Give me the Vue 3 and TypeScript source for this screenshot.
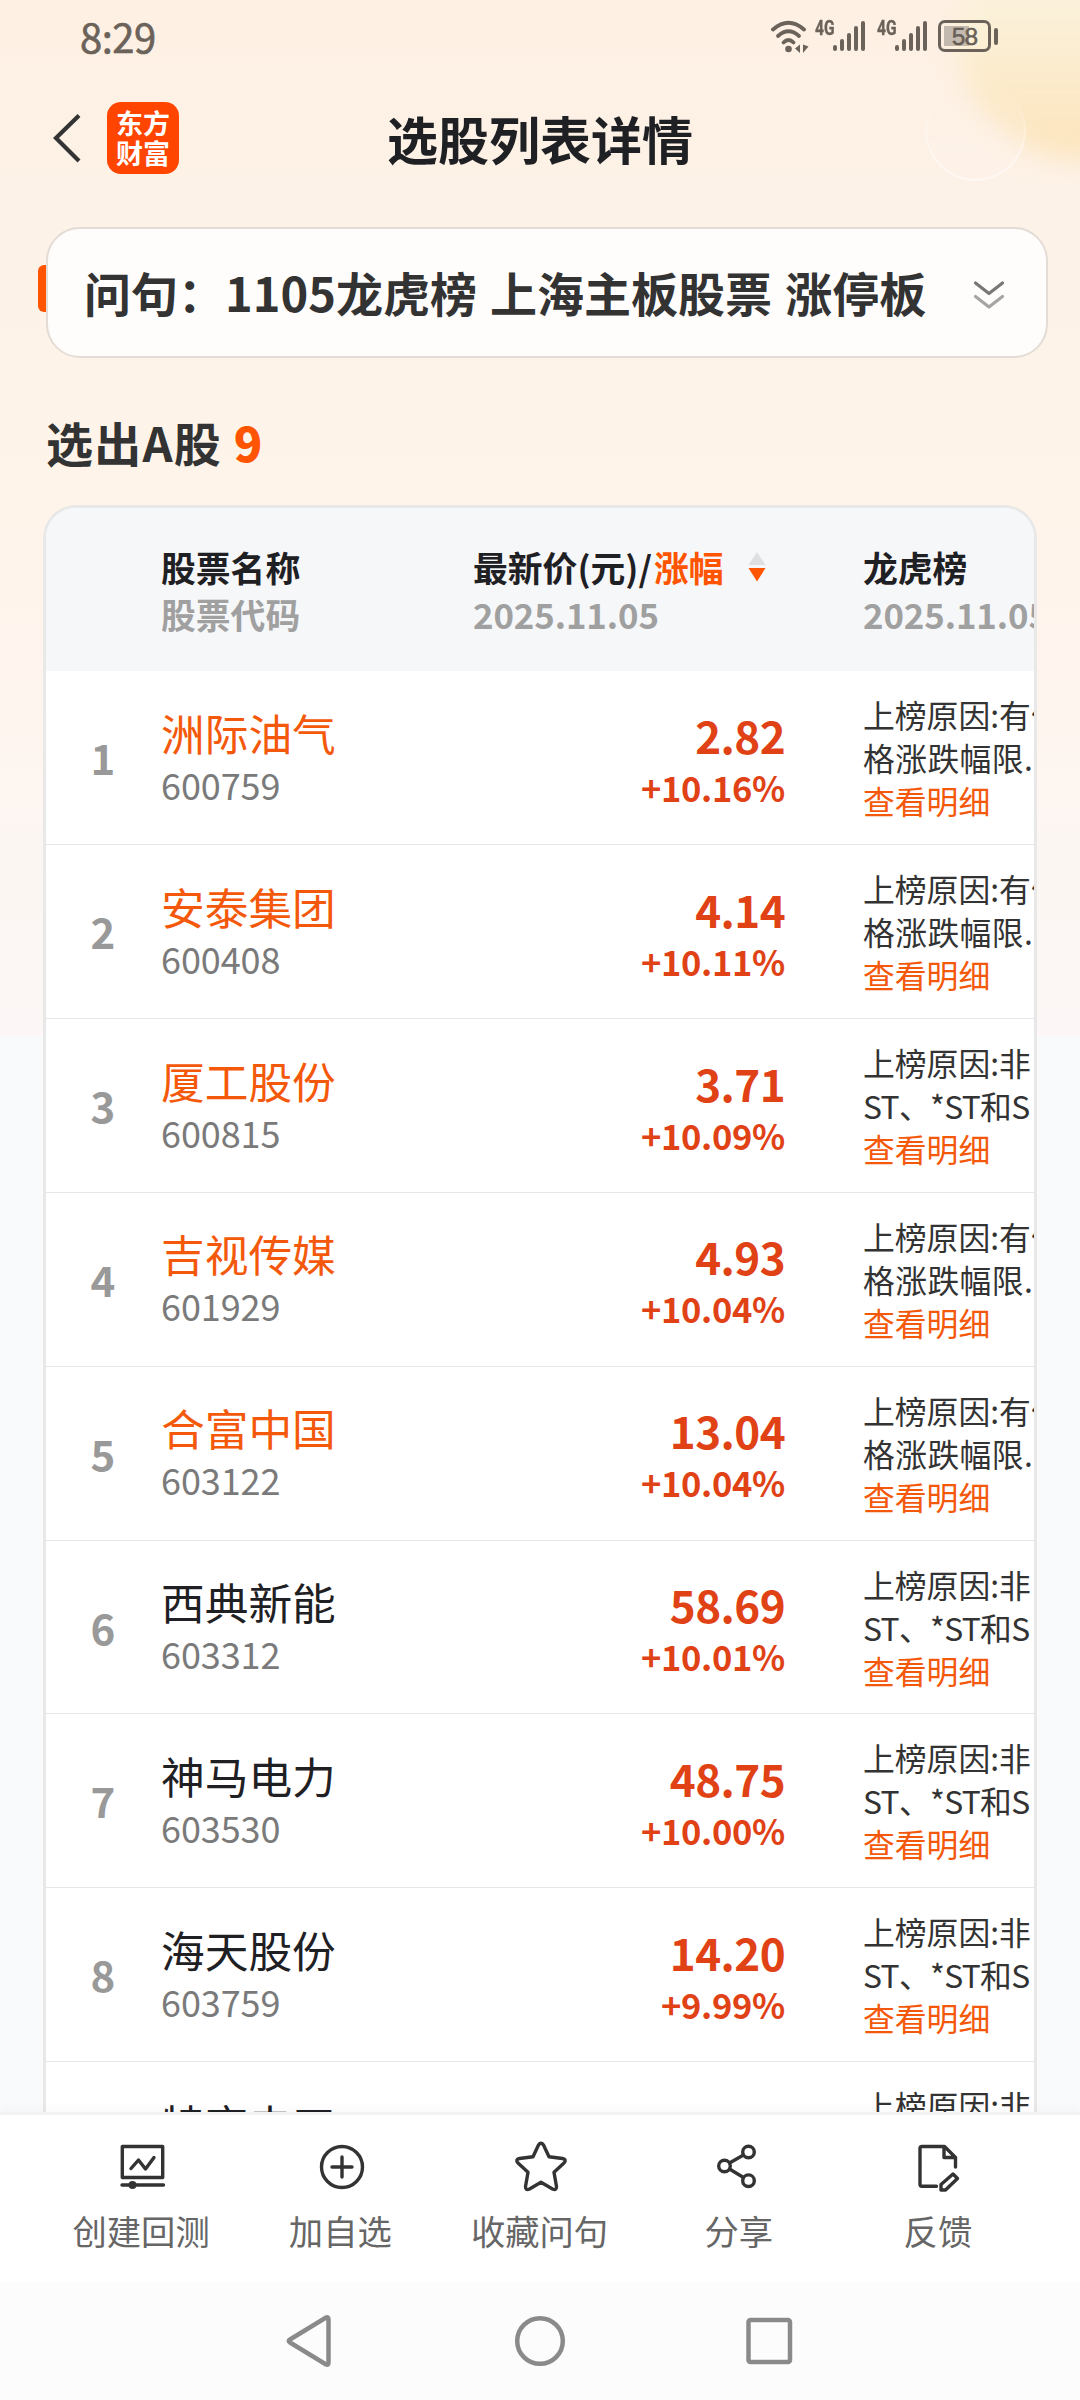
<script setup lang="ts">
interface Stock {
  name: string
  code: string
  price: string
  change: string
  held: boolean
  reason: [string, string]
}

const priced: [string, string] = ['上榜原因:有价', '格涨跌幅限...']
const nonSt: [string, string] = ['上榜原因:非', 'ST、*ST和S']

const stocks: Stock[] = [
  { name: '洲际油气', code: '600759', price: '2.82', change: '+10.16%', held: true, reason: priced },
  { name: '安泰集团', code: '600408', price: '4.14', change: '+10.11%', held: true, reason: priced },
  { name: '厦工股份', code: '600815', price: '3.71', change: '+10.09%', held: true, reason: nonSt },
  { name: '吉视传媒', code: '601929', price: '4.93', change: '+10.04%', held: true, reason: priced },
  { name: '合富中国', code: '603122', price: '13.04', change: '+10.04%', held: true, reason: priced },
  { name: '西典新能', code: '603312', price: '58.69', change: '+10.01%', held: false, reason: nonSt },
  { name: '神马电力', code: '603530', price: '48.75', change: '+10.00%', held: false, reason: nonSt },
  { name: '海天股份', code: '603759', price: '14.20', change: '+9.99%', held: false, reason: nonSt },
  { name: '特变电工', code: '600089', price: '24.44', change: '+9.99%', held: false, reason: nonSt },
]

const bars = [6, 12, 18, 25, 30]
</script>

<template>
  <div class="screen">
    <div class="glow"></div>
    <div class="ring"></div>

    <div class="status">
      <span class="time">8:29</span>
      <div class="tray">
        <svg class="wifi" width="38" height="34" viewBox="0 0 38 34" fill="none" stroke="#6b625a" stroke-width="3.8" stroke-linecap="round">
          <path d="M2 9.500 Q17.500 -4 33 9.500" />
          <path d="M7 16 Q17.500 6.500 28 16" />
          <path d="M12.500 22.500 Q17.500 17.500 22.500 22.500" />
          <circle cx="17.5" cy="29" r="3.3" fill="#6b625a" stroke="none" />
          <path d="M29 24.500V33L24 28.500ZM32 24.500V33L37.500 26.500Z" fill="#6b625a" stroke="none" />
        </svg>
        <div v-for="sim in 2" :key="sim" class="sim">
          <span class="net">4G</span>
          <span class="bars"><i v-for="h in bars" :key="h" :style="{ height: h + 'px' }"></i></span>
        </div>
        <div class="battery"><span>58</span></div>
        <i class="cap"></i>
      </div>
    </div>

    <header class="head">
      <svg class="back" width="30" height="52" viewBox="0 0 30 52" fill="none" stroke="#333" stroke-width="4.200">
        <path d="M26 3.500 L3 26 L26 49" />
      </svg>
      <div class="logo"><span>东方</span><span>财富</span></div>
      <h1>选股列表详情</h1>
    </header>

    <div class="query">
      <i class="tab"></i>
      <div class="qcard">
        <span class="qtext">问句：1105龙虎榜 上海主板股票 涨停板</span>
        <svg class="expand" width="32" height="30" viewBox="0 0 32 30" fill="none" stroke-width="3.200" stroke-linecap="round" stroke-linejoin="round">
          <path d="M2.500 3 L16 13.500 L29.500 3" stroke="#777" />
          <path d="M2.500 16.500 L16 27 L29.500 16.500" stroke="#a5a5a5" />
        </svg>
      </div>
    </div>

    <h2 class="count">选出A股 <b>9</b></h2>

    <main class="table">
      <div class="row thead">
        <div class="idx"></div>
        <div class="c1"><p>股票名称</p><p class="sub">股票代码</p></div>
        <div class="c2">
          <p class="sort">
            最新价(元)/<em>涨幅</em>
            <svg width="18" height="30" viewBox="0 0 18 30"><path d="M9 0 L17.500 13 H0.500Z" fill="#dedfe1" /><path d="M9 29.500 L17.500 16 H0.500Z" fill="#ff5500" /></svg>
          </p>
          <p class="sub num">2025.11.05</p>
        </div>
        <div class="c3"><p>龙虎榜</p><p class="sub num">2025.11.05</p></div>
      </div>
      <div v-for="(s, i) in stocks" :key="s.code" class="row">
        <div class="idx">{{ i + 1 }}</div>
        <div class="c1">
          <p class="name" :class="{ held: s.held }">{{ s.name }}</p>
          <p class="code">{{ s.code }}</p>
        </div>
        <div class="c2 quote">
          <p class="price">{{ s.price }}</p>
          <p class="pct">{{ s.change }}</p>
        </div>
        <div class="c3 reason">
          <p>{{ s.reason[0] }}</p>
          <p :class="s.reason === nonSt ? 'latin' : 'limit'">{{ s.reason[1] }}</p>
          <p class="more">查看明细</p>
        </div>
      </div>
    </main>

    <footer class="actions">
      <div class="act">
        <svg width="60" height="60" viewBox="0 0 60 60"><path d="M10.300 10.500H50.700V41.500H10.300ZM10 49H51.500" /><path d="M19 32.500 L26.500 24 L33.500 33 L42 21.500" /><circle cx="20.500" cy="49" r="4" class="solid" /></svg>
        <span>创建回测</span>
      </div>
      <div class="act">
        <svg width="60" height="60" viewBox="0 0 60 60"><circle cx="31" cy="31" r="20.500" /><path d="M31 21V41M21 31H41" /></svg>
        <span>加自选</span>
      </div>
      <div class="act">
        <svg width="60" height="60" viewBox="0 0 60 60"><path d="M28.500 9 Q31 5.500 33.500 9 L39 20.700 L52.500 22.500 Q57 23.500 54 27 L44 36.300 L46.500 50.500 Q46.500 55 42.500 53 L31 46.300 L19.500 53 Q15.500 55 15.500 50.500 L18 36.300 L8 27 Q5 23.500 9.500 22.500 L23 20.700Z" /></svg>
        <span>收藏问句</span>
      </div>
      <div class="act">
        <svg width="60" height="60" viewBox="0 0 60 60"><circle cx="15.500" cy="30" r="5.800" /><circle cx="39.500" cy="16" r="5.800" /><circle cx="39.500" cy="44.700" r="5.800" /><path d="M20.500 27 L34.500 19M20.500 33 L34.500 41.500" /></svg>
        <span>分享</span>
      </div>
      <div class="act">
        <svg width="60" height="60" viewBox="0 0 60 60"><path d="M28.500 50.300H14Q12 50.300 12 48.300V12.500Q12 10.500 14 10.500H36.500L47.500 21.500V31M36 10.500V21.500H47.500M33 54V48.500L45 38L49.500 42.500L37.500 54Z" /></svg>
        <span>反馈</span>
      </div>
    </footer>

    <nav class="nav">
      <svg width="50" height="54" viewBox="0 0 50 54"><path d="M6 25.500 Q3.500 27 6 28.500 L42 50.500 Q44.500 51.500 44.500 48.500 V5.500 Q44.500 2.500 42 3.500Z" /></svg>
      <svg width="54" height="54" viewBox="0 0 54 54"><circle cx="27" cy="27" r="22.800" /></svg>
      <svg width="50" height="54" viewBox="0 0 50 54"><rect x="2.500" y="6" width="41.500" height="42" rx="2" /></svg>
    </nav>
  </div>
</template>

<style>
body { margin: 0; }
</style>

<style scoped>
.screen {
  position: relative;
  width: 1080px;
  height: 2400px;
  overflow: hidden;
  display: flex;
  flex-direction: column;
  font-family: "Noto Sans CJK SC", sans-serif;
  color: #333;
  background: linear-gradient(180deg, #fef0e3 0, #fdf2e7 200px, #fff4ea 500px, #fff5ef 700px, #fcf6f2 850px, #fcf7f6 1036px, #f9fafc 1037px);
}
p, h1, h2 { margin: 0; white-space: nowrap; }
i, em { font-style: normal; }
.glow {
  position: absolute;
  left: 957px;
  top: -90px;
  width: 250px;
  height: 250px;
  border-radius: 50%;
  background: linear-gradient(180deg, #fbf2dc 35%, #fce6c0 90%);
  filter: blur(12px);
}
.ring {
  position: absolute;
  box-sizing: border-box;
  left: 925px;
  top: 80px;
  width: 101px;
  height: 101px;
  border-radius: 50%;
  border: 2px solid rgba(255, 255, 255, .45);
  background: rgba(254, 243, 235, .35);
  mask-image: linear-gradient(180deg, transparent 10%, #000 75%);
}
.status {
  position: relative;
  height: 76px;
  flex: none;
  display: flex;
  justify-content: space-between;
  padding: 0 82px 0 80px;
  color: #6b625a;
}
.time { font-size: 40px; line-height: 72px; font-weight: 400; -webkit-text-stroke: .6px #6b625a; letter-spacing: -.5px; }
.tray { display: flex; padding-top: 20px; height: 33px; }
.wifi { margin-right: 6px; }
.sim { display: flex; width: 61.5px; height: 32px; }
.net { font: 700 21px/16px Roboto, sans-serif; transform: scaleX(.74); transform-origin: 0 0; width: 18px; flex: none; -webkit-text-stroke: .4px #6b625a; }
.bars { display: flex; align-items: flex-end; gap: 3.1px; height: 31px; }
.bars i { width: 4px; border-radius: 2px; background: #6b625a; }
.battery {
  box-sizing: border-box;
  width: 53px;
  height: 32px;
  border: 3px solid #6b625a;
  border-radius: 7px;
  text-align: center;
  font: 400 24.500px/27px "Liberation Sans", sans-serif;
  letter-spacing: -1px;
  -webkit-text-stroke: .4px #5a524b;
  background: linear-gradient(#c4b9ae, #c4b9ae) 2.500px 3px / 25px 20px no-repeat;
}
.cap { width: 4px; height: 17px; border-radius: 2px; background: #6b625a; margin: 8px 0 0 3px; }
.head {
  position: relative;
  height: 128px;
  flex: none;
  display: flex;
  align-items: center;
  padding-left: 53px;
}
.logo {
  width: 72px;
  height: 72px;
  margin: -4px 0 0 24px;
  border-radius: 14px;
  background: #ff4500;
  color: #fff;
  display: flex;
  flex-direction: column;
  align-items: center;
  justify-content: center;
  font-size: 27px;
  line-height: 30px;
  font-weight: 700;
}
.back { margin-top: -4px; }
h1 { margin: -4px 0 0 208px; font-size: 51px; line-height: 74px; font-weight: 700; color: #1f2024; }
.query { position: relative; display: flex; align-items: center; margin: 23px 32px 0 38px; height: 131px; flex: none; }
.tab { width: 8px; height: 47px; margin-top: -8px; border-radius: 6px 0 0 6px; background: #ff5500; }
.qcard {
  box-sizing: border-box;
  flex: 1;
  height: 131px;
  border: 2px solid #e3dcd6;
  border-radius: 34px;
  background: #fffdfb;
  display: flex;
  align-items: center;
  justify-content: space-between;
  padding: 0 41px 0 36px;
}
.qtext { font-size: 47px; font-weight: 700; line-height: 70px; white-space: nowrap; word-spacing: 2.500px; margin-top: -1px; }
.expand { margin-top: 5px; }
.count { position: relative; margin: 49px 0 0 46px; height: 70px; line-height: 70px; font-size: 47px; font-weight: 700; letter-spacing: 1.200px; flex: none; }
.count b { color: #ff5500; }
.table {
  position: relative;
  box-sizing: border-box;
  width: 994px;
  height: 1607px;
  flex: none;
  margin: 28px 0 0 43px;
  border: 3px solid #e8e8e8;
  border-bottom: 0;
  border-radius: 33px 33px 0 0;
  background: #fff;
  overflow: hidden;
}
.row { display: flex; box-sizing: border-box; height: 173.860px; border-bottom: 1px solid #e6e6e6; }
.thead { height: 163.300px; border: 0; background: #f6f7f9; padding-top: 35.500px; font-size: 34.800px; font-weight: 700; line-height: 47px; color: #1f2024; }
.sub { color: #a0a0a0; }
.num { letter-spacing: -.1px; }
.thead em { color: #ff5500; }
.idx { box-sizing: border-box; width: 115px; padding-right: 1px; text-align: center; line-height: 172px; font-size: 42px; font-weight: 700; color: #999; flex: none; }
.c1 { width: 312px; flex: none; }
.c2 { width: 390px; flex: none; }
.c3 { flex: none; }
.sort { display: flex; align-items: center; }
.sort em { margin-left: 2px; }
.sort svg { margin-left: 24px; flex: none; }
.name { font-size: 43.700px; line-height: 60px; margin-top: 30.500px; color: #1f2024; }
.held { color: #f4590b; }
.code { font-size: 36px; line-height: 44px; color: #7a7a7a; letter-spacing: -.1px; }
.quote { box-sizing: border-box; padding-right: 78px; text-align: right; font-weight: 700; color: #e04216; }
.price { font-size: 44px; line-height: 60px; margin-top: 33.500px; letter-spacing: -.6px; }
.pct { font-size: 34.500px; line-height: 44px; letter-spacing: -.3px; }
.reason { font-size: 31.800px; line-height: 43px; padding-top: 22px; }
.latin { letter-spacing: -.7px; }
.limit { letter-spacing: .4px; }
.more { color: #f4590b; }
.actions {
  position: relative;
  box-sizing: border-box;
  height: 170px;
  flex: none;
  display: flex;
  padding: 0 42px;
  border-top: 3px solid #f3f3f3;
  background: #fff;
  box-shadow: 0 -2px 12px rgba(0, 0, 0, .03);
}
.act { flex: 1; display: flex; flex-direction: column; align-items: center; padding-top: 21px; font-size: 34.300px; line-height: 50px; color: #666; }
.act span { margin-left: -1px; }
.act svg { fill: none; stroke: #333; stroke-width: 3.400; stroke-linecap: round; stroke-linejoin: round; margin-bottom: 9px; }
.act .solid { fill: #333; stroke: none; }
.nav { position: relative; flex: 1; display: flex; justify-content: center; gap: 179px; padding-top: 32px; background: #fcfcfc; }
.nav svg { fill: none; stroke: #8a8a8a; stroke-width: 4.500; }
</style>
